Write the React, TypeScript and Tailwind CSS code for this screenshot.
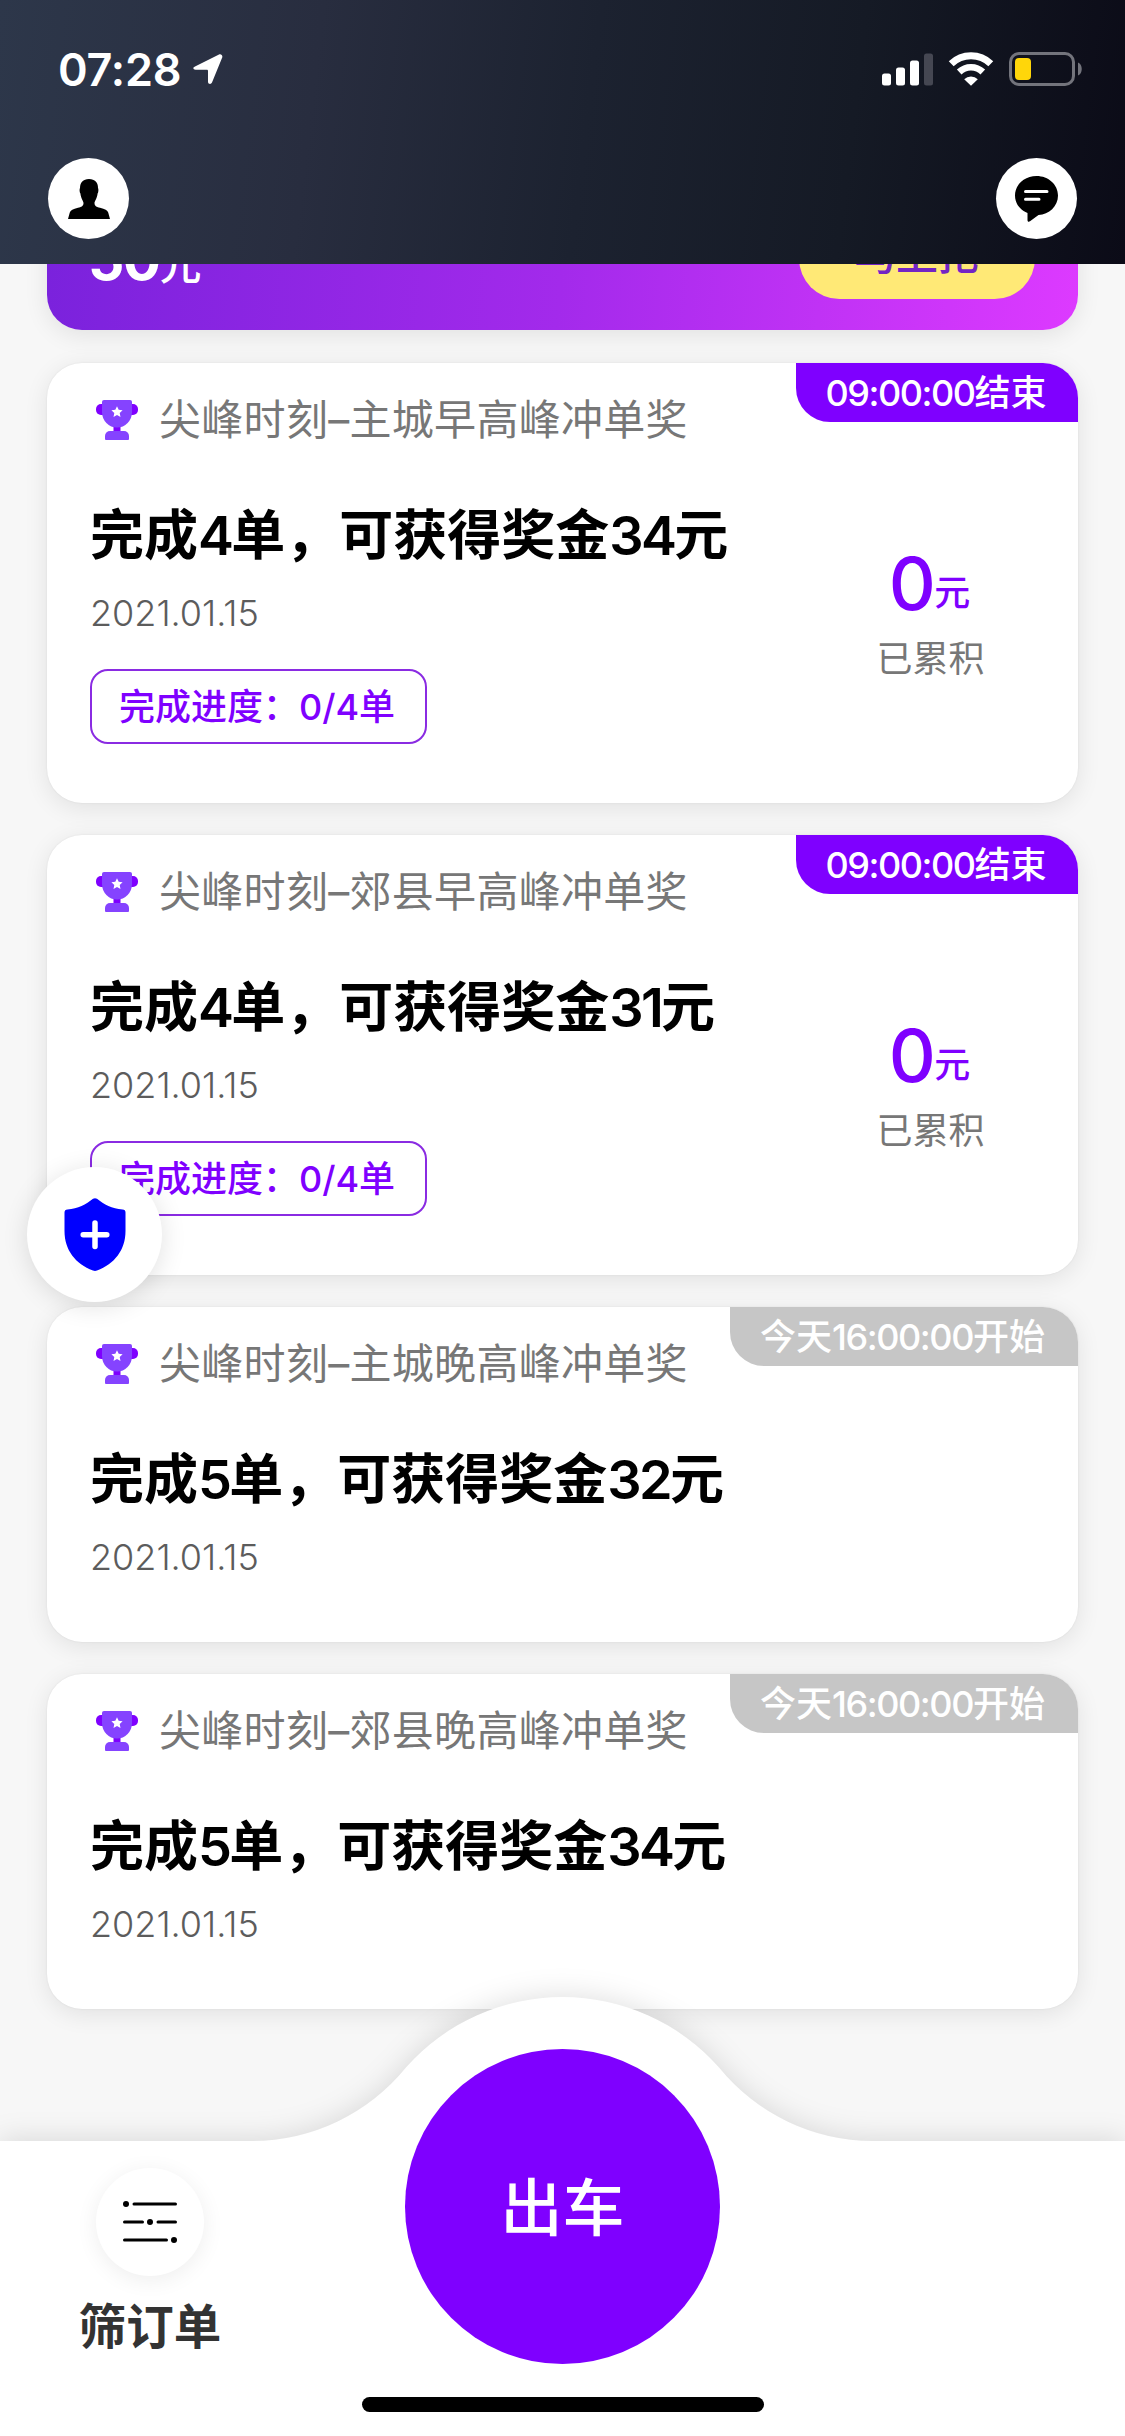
import React from "react";

type Offer = {
  title: string;
  goal: string;
  badge: string;
  active: boolean;
};

const offers: Offer[] = [
  { title: "尖峰时刻–主城早高峰冲单奖", goal: "完成4单，可获得奖金34元", badge: "09:00:00结束", active: true },
  { title: "尖峰时刻–郊县早高峰冲单奖", goal: "完成4单，可获得奖金31元", badge: "09:00:00结束", active: true },
  { title: "尖峰时刻–主城晚高峰冲单奖", goal: "完成5单，可获得奖金32元", badge: "今天16:00:00开始", active: false },
  { title: "尖峰时刻–郊县晚高峰冲单奖", goal: "完成5单，可获得奖金34元", badge: "今天16:00:00开始", active: false },
];

/* Gives runs of digits their own spacing beside the Chinese text. */
function Mixed({ text, digits }: { text: string; digits: string }) {
  return (
    <span className="whitespace-nowrap">
      {text.split(/([\d:/]+)/).map((part, i) =>
        i % 2 ? (
          <span key={i} className={digits}>
            {part}
          </span>
        ) : (
          part
        )
      )}
    </span>
  );
}

function Trophy() {
  return (
    <svg width="42" height="40" viewBox="0 0 42 40" className="shrink-0">
      <rect x="0" y="4" width="42" height="11" rx="5" fill="#7f00ff" />
      <rect x="17.5" y="25" width="7" height="8" fill="#7f00ff" />
      <path d="M8 0h26a2 2 0 0 1 2 2v10a15 15.500 0 0 1-30 0V2a2 2 0 0 1 2-2z" fill="#8543ff" />
      <path d="M9 39v-3a5 5 0 0 1 5-5h14a5 5 0 0 1 5 5v3a1 1 0 0 1-1 1H10a1 1 0 0 1-1-1z" fill="#8543ff" />
      <path d="M21 6.200l1.700 3.600 3.900.5-2.900 2.700.8 3.900-3.500-1.900-3.500 1.900.8-3.900-2.900-2.700 3.900-.5z" fill="#fff" />
    </svg>
  );
}

function OfferCard({ offer }: { offer: Offer }) {
  return (
    <section
      className={`relative flex shrink-0 justify-between overflow-hidden rounded-[35px] bg-white shadow-[0_5px_24px_rgba(0,0,0,0.09),0_0_2px_rgba(0,0,0,0.08)] ${
        offer.active ? "h-[440px]" : "h-[335px]"
      }`}
    >
      <div className="flex flex-col items-start pl-[43px] pt-[27px]">
        <div className="flex h-[60px] items-center gap-[21px] pl-[6px]">
          <Trophy />
          <span className="text-[42px] font-normal leading-[60px] tracking-[0.3px] whitespace-nowrap text-[#777]">{offer.title}</span>
        </div>
        <h2 className="mt-[46px] text-[54px] font-semibold leading-[80px] text-black">
          <Mixed text={offer.goal} digits="tracking-[-0.05em]" />
        </h2>
        <p className="mt-[13px] text-[36px] font-light leading-[48px] text-[#5c5c5c]">2021.01.15</p>
        {offer.active && (
          <div className="mt-8 flex h-[75px] w-[337px] items-center justify-center rounded-[18px] border-2 border-[#8a2be2] pr-[3px] text-[36px] font-medium leading-none text-[#7f00ff]">
            <Mixed text="完成进度：0/4单" digits="tracking-normal" />
          </div>
        )}
      </div>
      {offer.active && (
        <div className="flex w-[295px] flex-col items-center pt-[181px]">
          <div className="flex items-baseline pr-0.5 leading-[80px] text-[#7f00ff]">
            <span className="text-[73px] font-medium tracking-[-0.02em]">0</span>
            <span className="relative -top-[4px] text-[36px] font-medium">元</span>
          </div>
          <div className="-mt-[4px] text-[36px] font-normal leading-[52px] text-[#777]">已累积</div>
        </div>
      )}
      <div
        className={`absolute right-0 top-0 flex h-[59px] items-center justify-center rounded-bl-[34px] text-[36px] font-medium leading-none text-white ${
          offer.active ? "w-[282px] bg-[#7f00ff] pr-[2px]" : "w-[348px] bg-[#c6c6c6] pr-[3px]"
        }`}
      >
        <Mixed text={offer.badge} digits="tracking-[-0.04em]" />
      </div>
    </section>
  );
}

function StatusBar() {
  return (
    <div className="flex h-[138px] items-center justify-between pl-[58px] pr-[42px]">
      <div className="flex items-center gap-[12px]">
        <span className="text-[45px] font-semibold leading-none tracking-[-0.2px] text-white">07:28</span>
        <svg width="30" height="31" viewBox="0 0 30 31">
          <path d="M2 12.500L26 .6c2-.9 4 .9 3.200 3L19 28.500c-.9 2.200-4 1.700-4-.8V17c0-1-.4-1.300-1.300-1.300H2.600C0 15.700-.5 13.600 2 12.500z" fill="#fff" />
        </svg>
      </div>
      <div className="flex items-center">
        <svg width="51" height="34" viewBox="0 0 51 34">
          <rect x="0" y="21.500" width="9" height="12" rx="2.500" fill="#fff" />
          <rect x="14" y="15.500" width="9" height="18" rx="2.500" fill="#fff" />
          <rect x="28" y="8.500" width="9" height="25" rx="2.500" fill="#fff" />
          <rect x="42" y="1.500" width="9" height="32" rx="2.500" fill="#454752" />
        </svg>
        <svg width="46" height="34" viewBox="0 0 46 34" className="ml-[15px]">
          <path d="M3.200 11.700a28.500 28.500 0 0 1 39.600 0" fill="none" stroke="#fff" strokeWidth="7" />
          <path d="M11.200 20a17 17 0 0 1 23.600 0" fill="none" stroke="#fff" strokeWidth="6.600" />
          <path d="M23 33.800l-6.800-6.600a9.600 9.600 0 0 1 13.600 0z" fill="#fff" />
        </svg>
        <svg width="74" height="34" viewBox="0 0 74 34" className="ml-[15px]">
          <rect x="1.500" y="1.500" width="63" height="31" rx="8.500" fill="none" stroke="#73747c" strokeWidth="3" />
          <rect x="6" y="6" width="16" height="22" rx="4" fill="#ffd60a" />
          <path d="M69 10.500c5 2 5 11 0 13z" fill="#73747c" />
        </svg>
      </div>
    </div>
  );
}

export default function App() {
  return (
    <div className="relative flex h-[2436px] w-[1125px] flex-col overflow-hidden bg-[#f7f7f7] font-['Inter','Noto_Sans_CJK_SC',sans-serif]">
      <header className="relative z-10 h-[264px] shrink-0 bg-[linear-gradient(97deg,#2d374a_0%,#282d3f_28%,#1c2230_52%,#151a25_75%,#0b0b17_100%)]">
        <StatusBar />
        <div className="flex items-center justify-between px-12 pt-5">
          <button className="flex size-[81px] items-center justify-center rounded-full bg-white">
            <svg width="42" height="40" viewBox="0 0 42 40">
              <path d="M21 0c6 0 9 3.500 9 9 .6 1 .6 4-.4 5.500-.5 5-3.100 7.500-3.100 9.500 0 3.500 2.500 4 5.500 4.800 5 1.200 7.500 2.700 8.200 4.700L42 40H0l1.800-6.500c.7-2 3.200-3.500 8.200-4.700 3-.8 5.500-1.300 5.500-4.800 0-2-2.600-4.500-3.100-9.500-1-1.500-1-4.500-.4-5.500 0-5.500 3-9 9-9z" />
            </svg>
          </button>
          <button className="flex size-[81px] items-center justify-center rounded-full bg-white">
            <svg width="43" height="46" viewBox="0 0 43 46">
              <path d="M21.500 0C33.500 0 43 8.600 43 19.500S34 38.500 23.500 39l-8.500 6.300c-1.500 1-2.500.4-2.500-1.300v-7C5 33.800 0 27.500 0 19.500 0 8.600 9.500 0 21.500 0z" />
              <path d="M10.500 15.500h21.500M10.500 23.200h13.500" stroke="#fff" strokeWidth="3" strokeLinecap="round" />
            </svg>
          </button>
        </div>
      </header>

      <main className="-mt-[66px] flex h-[1943px] shrink-0 flex-col gap-8 px-[47px]">
        <section className="mb-px flex h-[132px] shrink-0 items-start justify-between rounded-[35px] bg-[linear-gradient(95deg,#7a22dc_0%,#a32aeb_50%,#dd3aff_100%)] pl-[41px] pr-[43px] shadow-[0_5px_24px_rgba(0,0,0,0.09)]">
          <div className="flex items-baseline pt-5 text-white">
            <span className="text-[57px] font-bold leading-[84px] tracking-[-0.03em]">50</span>
            <span className="text-[42px] font-medium leading-[84px]">元</span>
          </div>
          <button className="mt-5 flex h-[81px] w-[236px] items-center justify-center rounded-full bg-[#ffe976] pb-[8px] text-[42px] font-medium leading-none text-[#7324c4]">
            马上抢
          </button>
        </section>
        {offers.map((offer) => (
          <OfferCard key={offer.title} offer={offer} />
        ))}
      </main>

      <footer className="relative flex h-[295px] shrink-0">
        <svg width="1125" height="520" viewBox="0 -225 1125 520" className="absolute bottom-0 left-0 drop-shadow-[0_-2px_14px_rgba(0,0,0,0.12)]">
          <path d="M0 0H253A199 199 0 0 0 406 -73.500A209 209 0 0 1 719 -73.500A199 199 0 0 0 872 0H1125V295H0z" fill="#fff" />
        </svg>
        <button className="relative ml-[75px] flex h-[220px] w-[150px] flex-col items-center pt-[27px]">
          <span className="flex size-[108px] items-center justify-center rounded-full bg-white shadow-[0_4px_22px_rgba(0,0,0,0.07)]">
            <svg width="54" height="42" viewBox="0 0 54 42" fill="#000" stroke="#000" strokeWidth="3" strokeLinecap="round">
              <path d="M11 3H52.500M1.500 21H19.500M35 21H52.500M1.500 39H43.500" />
              <circle cx="3" cy="3" r="3" stroke="none" />
              <circle cx="27" cy="21" r="3" stroke="none" />
              <circle cx="51" cy="39" r="3" stroke="none" />
            </svg>
          </span>
          <span className="mt-[19px] text-[47.5px] font-semibold leading-[64px] whitespace-nowrap text-[#333]">筛订单</span>
        </button>
        <button className="absolute -top-[92px] left-[405px] flex size-[315px] items-center justify-center rounded-full bg-[#7f00ff] pt-1 text-[62px] font-medium leading-none text-white">
          出车
        </button>
        <div className="absolute bottom-6 left-[362px] h-[15px] w-[402px] rounded-full bg-black" />
      </footer>

      <button className="absolute left-[27px] top-[1167px] flex size-[135px] items-center justify-center rounded-full bg-white shadow-[0_4px_26px_rgba(0,0,0,0.12)]">
        <svg width="62" height="73" viewBox="0 0 62 73">
          <path d="M29 .8a4 4 0 0 1 4 0C40 6.500 48 11 58.500 11.500a3 3 0 0 1 3 3V33c0 19-11 33-28.500 39.500a5 5 0 0 1-4 0C11.500 66 .5 52 .5 33V14.500a3 3 0 0 1 3-3C14 11 22 6.500 29 .8z" fill="#0000ff" />
          <path d="M31 25v23.500M19.200 36.800h23.600" stroke="#fff" strokeWidth="5.500" strokeLinecap="round" />
        </svg>
      </button>
    </div>
  );
}
